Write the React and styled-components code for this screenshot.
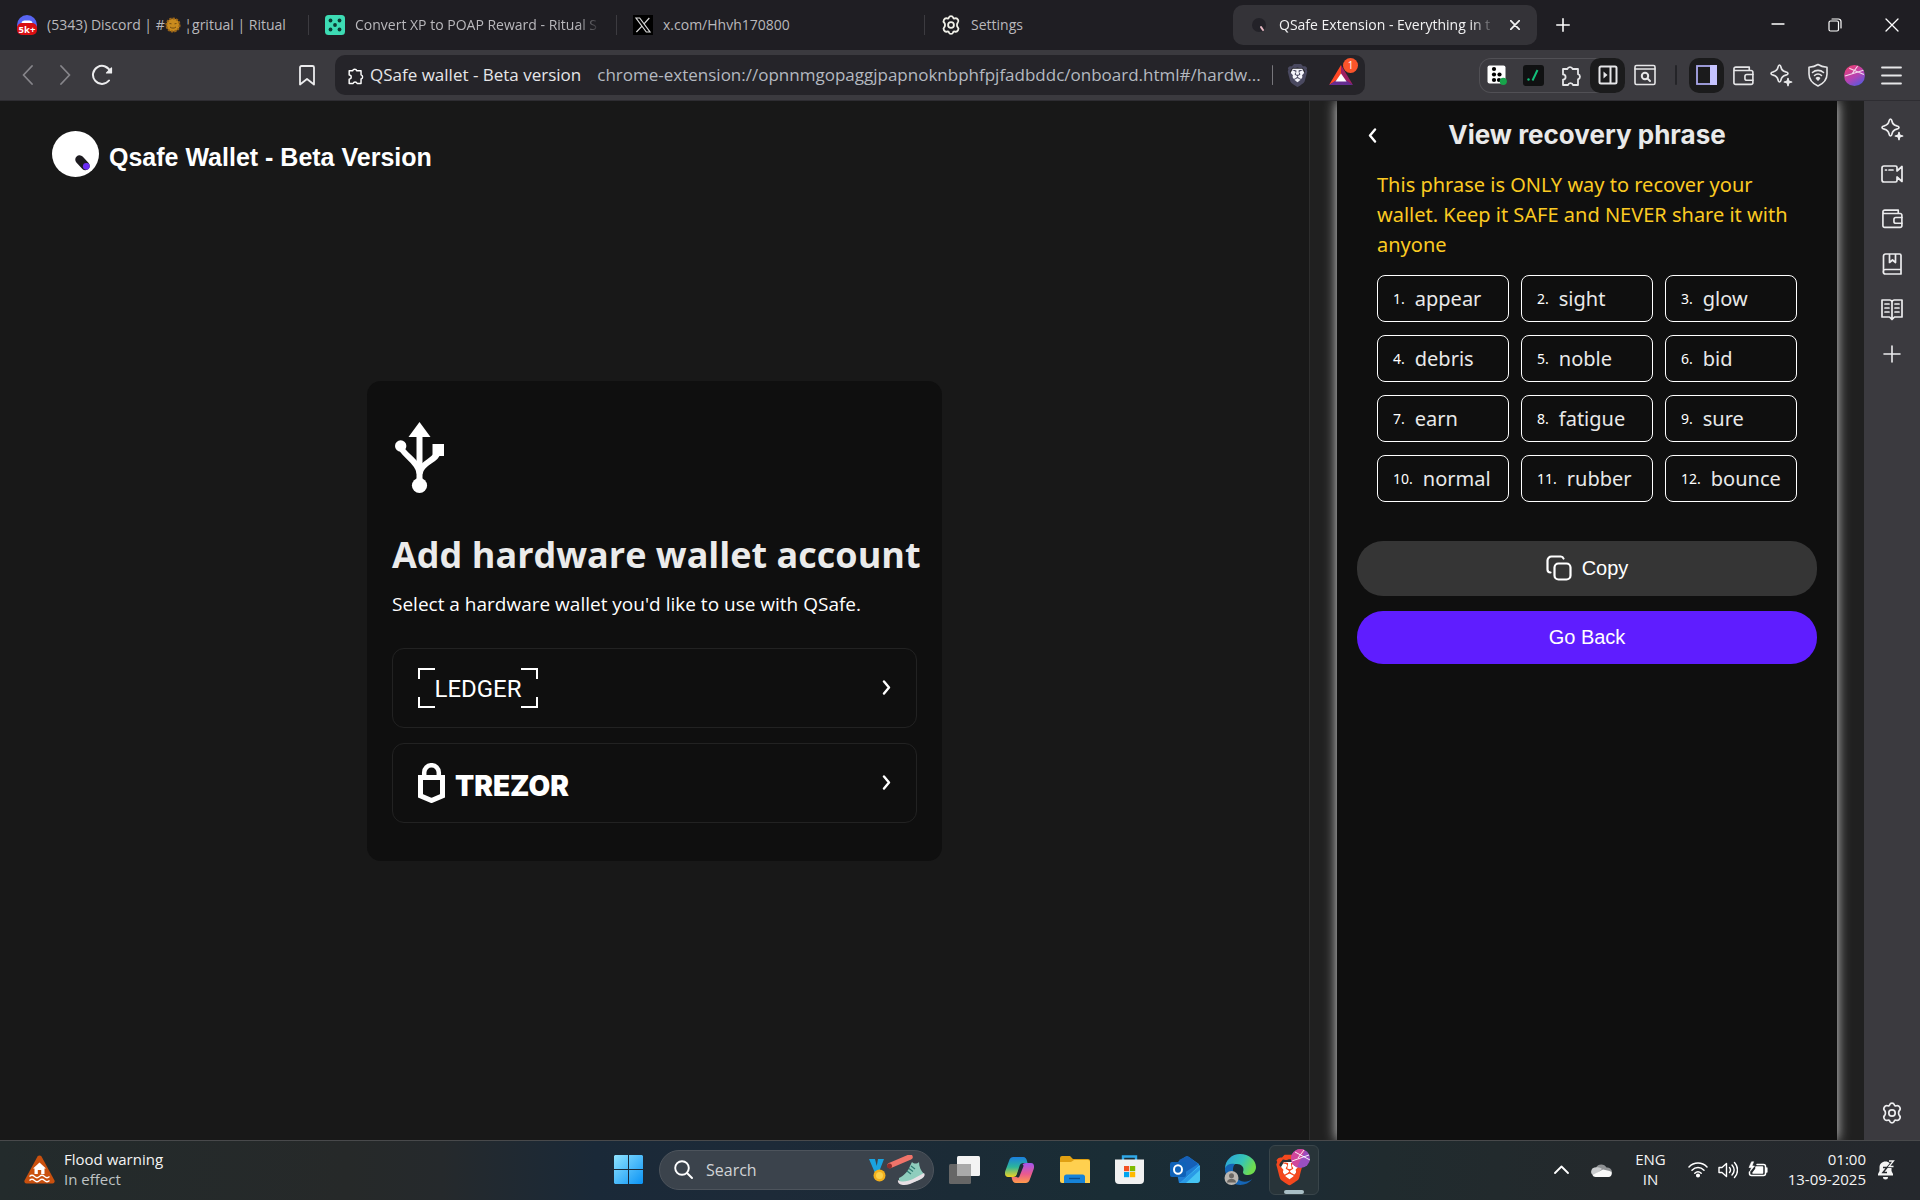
import React from "react";
import styled, { createGlobalStyle, css } from "styled-components";
import { SiBrave } from "react-icons/si";

const ui = `"Open Sans", "Noto Sans", sans-serif`;
const noto = `"Noto Sans", "Open Sans", sans-serif`;
const arial = `"Liberation Sans", Arial, sans-serif`;
const display = `Inter, "Open Sans", sans-serif`;

const Global = createGlobalStyle`
  *, *::before, *::after { box-sizing: border-box; }
  body { margin: 0; background: #181818; color: #fff; font-family: ${ui}; }
  h1, h2, p, ol { margin: 0; padding: 0; }
  ol { list-style: none; }
  button { border: 0; padding: 0; background: none; color: inherit; font: inherit; cursor: pointer; }
  input { border: 0; padding: 0; margin: 0; background: none; color: inherit; font: inherit; outline: none; }
  svg { display: block; flex: none; }
`;

const Screen = styled.div`
  display: flex;
  flex-direction: column;
  min-height: 100vh;
`;

/* ---------- tab strip ---------- */

const TabStrip = styled.header`
  display: flex;
  align-items: center;
  height: 50px;
  padding-left: 1px;
  background: #1f1e23;
`;

const Tab = styled.div`
  display: flex;
  align-items: center;
  flex: 0 1 308px;
  min-width: 0;
  height: 40px;
  padding: 0 16px;
  position: relative;
  color: #b9b8bc;
  ${(p) =>
    p.$divided &&
    css`
      &::after {
        content: "";
        position: absolute;
        right: 0;
        top: 10px;
        width: 1px;
        height: 20px;
        background: #3c3b40;
      }
    `}
  ${(p) =>
    p.$active &&
    css`
      flex-basis: 304px;
      border-radius: 10px;
      background: #343338;
      color: #f2f2f3;
    `}
`;

const TabLabel = styled.button`
  display: flex;
  align-items: center;
  gap: 10px;
  flex: 1;
  min-width: 0;
  text-align: left;
`;

const TabTitle = styled.span`
  display: flex;
  align-items: center;
  flex: 1;
  min-width: 0;
  overflow: hidden;
  white-space: pre;
  font-size: 14px;
  line-height: 20px;
  ${(p) =>
    p.$fade &&
    css`
      mask-image: linear-gradient(to right, #000 calc(100% - 24px), transparent);
    `}
`;

const StripButton = styled.button`
  display: grid;
  place-items: center;
  width: ${(p) => p.$w || 40}px;
  height: 40px;
`;

const TabClose = styled.button`
  display: grid;
  place-items: center;
  width: 24px;
  height: 24px;
  margin-left: 8px;
  margin-right: -6px;
`;

const WindowControls = styled.div`
  display: flex;
  margin-left: auto;
`;

/* ---------- toolbar ---------- */

const Toolbar = styled.div`
  display: flex;
  align-items: center;
  height: 51px;
  padding: 0 11px 0 9px;
  border-bottom: 1px solid #2e2d32;
  background: #3b3a3f;
`;

const NavGroup = styled.nav`
  display: flex;
  align-items: center;
  flex: 0 0 326px;
`;

const NavButton = styled.button`
  display: grid;
  place-items: center;
  width: 37px;
  height: 34px;
  color: ${(p) => (p.$dim ? "#86858a" : "#ececee")};
  &:last-child {
    margin-left: auto;
    margin-right: 10px;
  }
`;

const AddressBar = styled.div`
  display: flex;
  align-items: center;
  flex: 1;
  min-width: 0;
  height: 40px;
  padding: 0 7px 0 11px;
  border-radius: 10px;
  background: #252429;
`;

const SiteName = styled.span`
  margin: 0 16px 0 5px;
  white-space: nowrap;
  font-size: 17px;
  line-height: 24px;
  color: #e6e6e8;
`;

const UrlInput = styled.input`
  flex: 1;
  min-width: 0;
  font-size: 17px;
  line-height: 24px;
  color: #b4b9c0;
`;

const Divider = styled.span`
  flex: none;
  width: ${(p) => p.$w || 1}px;
  height: 20px;
  border-radius: 1px;
  margin: ${(p) => p.$m};
  background: ${(p) => p.$c};
`;

const ShieldButton = styled.button`
  margin-right: 20px;
`;

const RewardsButton = styled.button`
  position: relative;
  width: 29px;
  height: 32px;
  display: flex;
  align-items: center;
`;

const Badge = styled.span`
  position: absolute;
  top: -1px;
  right: 0;
  width: 15px;
  height: 15px;
  border-radius: 50%;
  background: #fb542b;
  color: #fff;
  font: 10px/15px ${ui};
  text-align: center;
`;

const Actions = styled.div`
  display: flex;
  align-items: center;
  gap: 2px;
  margin-left: 114px;
`;

const ExtensionGroup = styled.div`
  display: flex;
  gap: 2px;
  border-radius: 12px;
  box-shadow: inset 0 0 0 1px #515055;
`;

const ActionButton = styled.button`
  display: grid;
  place-items: center;
  width: 35px;
  height: 35px;
  border-radius: 10px;
  color: #e6e6e8;
  background: ${(p) => (p.$on ? "#1b1b1c" : "none")};
`;

/* ---------- page ---------- */

const Body = styled.div`
  display: flex;
  flex: 1;
`;

const Page = styled.main`
  display: grid;
  grid-template-rows: 1fr auto 1fr;
  justify-items: center;
  flex: 1;
  min-width: 0;
  border-right: 1px solid #2d2d2d;
  background: #181818;
`;

const Brand = styled.div`
  display: flex;
  align-items: flex-end;
  align-self: start;
  justify-self: start;
  gap: 10px;
  padding: 30px 52px;
  font: 700 25px/40px ${arial};
`;

const Card = styled.section`
  width: 575px;
  padding: 39px 25px 38px;
  border-radius: 14px;
  background: #0f0f0f;
`;

const CardTitle = styled.h1`
  margin-top: 34px;
  font-size: 36px;
  line-height: 50px;
  font-weight: 700;
  color: #ebebeb;
  white-space: nowrap;
`;

const CardText = styled.p`
  margin: 9px 0 29px;
  font-size: 19px;
  line-height: 30px;
`;

const WalletRow = styled.button`
  display: flex;
  align-items: center;
  justify-content: space-between;
  width: 100%;
  height: 80px;
  padding: 0 25px;
  border: 1px solid #222;
  border-radius: 12px;
  & + & {
    margin-top: 15px;
  }
`;

const LedgerFrame = styled.span`
  display: grid;
  place-items: center;
  width: 120px;
  height: 40px;
  padding-top: 1px;
  font: 400 24px/40px Roboto, sans-serif;
  --b: linear-gradient(#fff, #fff);
  background: var(--b) 0 0 / 17px 2px, var(--b) 0 0 / 2px 11px,
    var(--b) 100% 0 / 17px 2px, var(--b) 100% 0 / 2px 11px,
    var(--b) 0 100% / 17px 2px, var(--b) 0 100% / 2px 11px,
    var(--b) 100% 100% / 17px 2px, var(--b) 100% 100% / 2px 11px;
  background-repeat: no-repeat;
`;

const TrezorBrand = styled.span`
  display: flex;
  align-items: flex-end;
  gap: 10px;
  font: 900 28px/34px Inter, sans-serif;
`;

/* ---------- side panel ---------- */

const SidePanel = styled.aside`
  display: flex;
  justify-content: center;
  flex: 0 0 554px;
  overflow: hidden;
  background: #202020;
`;

const Popup = styled.div`
  width: 500px;
  padding: 17px 20px;
  background: #0f0f0f;
  box-shadow: 0 0 12px #ddd;
`;

const PopupHead = styled.div`
  display: grid;
  grid-template-columns: 30px 1fr 30px;
  align-items: center;
`;

const PopupTitle = styled.h2`
  font: 700 26px/34px ${display};
  text-align: center;
  color: #e9e9e9;
`;

const IconButton = styled.button`
  display: grid;
  place-items: center;
  height: 34px;
`;

const PopupBody = styled.div`
  padding: 18px 20px 39px;
  font-family: ${noto};
`;

const Warning = styled.p`
  font-size: 20px;
  line-height: 30px;
  color: #fbca22;
`;

const WordGrid = styled.ol`
  display: grid;
  grid-template-columns: repeat(3, 1fr);
  gap: 13px 12px;
  margin-top: 15px;
`;

const Word = styled.li`
  display: flex;
  align-items: center;
  gap: 10px;
  height: 47px;
  padding-left: 15px;
  border: 1px solid #fff;
  border-radius: 8px;
  font-size: 20px;
  color: #e9e9e9;
`;

const WordIndex = styled.span`
  font-size: 14px;
  color: #fff;
`;

const PillButton = styled.button`
  display: flex;
  align-items: center;
  justify-content: center;
  gap: 10px;
  width: 100%;
  height: ${(p) => (p.$primary ? 53 : 55)}px;
  padding-bottom: 2px;
  border-radius: 26px;
  background: ${(p) => (p.$primary ? "#5f1dff" : "#353535")};
  font: 20px/24px ${arial};
  & + & {
    margin-top: 15px;
  }
`;

const Sidebar = styled.nav`
  display: flex;
  flex-direction: column;
  flex: 0 0 56px;
  padding: 5px 0;
  background: #3b3a3f;
  color: #ececee;
`;

const SidebarButton = styled.button`
  display: grid;
  place-items: center;
  height: 45px;
  &:last-child {
    margin-top: auto;
  }
`;

/* ---------- taskbar ---------- */

const Taskbar = styled.footer`
  display: grid;
  grid-template-columns: 1fr auto 1fr;
  align-items: center;
  height: 60px;
  padding-bottom: 2px;
  border-top: 1px solid #48494b;
  background: linear-gradient(
    to right,
    #232b2c 0%,
    #262929 18%,
    #25292c 23%,
    #1a2938 31%,
    #1d2a38 40%,
    #1b2b36 50%,
    #1a2d35 58%,
    #1b2b36 66%,
    #202b2e 72%,
    #24292c 84%,
    #25282d 100%
  );
`;

const Widget = styled.button`
  display: flex;
  align-items: center;
  justify-self: start;
  gap: 9px;
  padding-left: 24px;
  text-align: left;
`;

const SmallLines = styled.span`
  display: flex;
  flex-direction: column;
  padding-bottom: 2px;
  font-size: 15px;
  line-height: 20px;
  color: #f4f4f4;
  text-align: ${(p) => p.$align || "left"};
`;

const Muted = styled.span`
  color: #bfc3c4;
`;

const Dock = styled.div`
  display: flex;
  align-items: center;
  height: 50px;
`;

const DockButton = styled.button`
  display: grid;
  place-items: center;
  width: ${(p) => p.$w || 55}px;
  height: 50px;
`;

const ActiveApp = styled.button`
  display: grid;
  grid-template-rows: 1fr 4px;
  justify-items: center;
  align-items: center;
  width: 50px;
  height: 50px;
  margin-left: 2px;
  border: 1px solid #39454a;
  border-radius: 6px;
  background: #283439;
  &::after {
    content: "";
    width: 20px;
    height: 4px;
    border-radius: 2px;
    background: #a9bfc6;
  }
`;

const SearchBox = styled.label`
  display: flex;
  align-items: center;
  gap: 13px;
  width: 275px;
  height: 40px;
  margin: 0 3px;
  padding: 0 8px 0 14px;
  border: 1px solid #4d545c;
  border-radius: 20px;
  background: #3b434c;
`;

const SearchInput = styled.input`
  flex: 1;
  min-width: 0;
  font-size: 16px;
  line-height: 24px;
  &::placeholder {
    color: #d0d3d6;
    opacity: 1;
  }
`;

const Tray = styled.div`
  display: flex;
  align-items: center;
  justify-self: end;
  padding-right: 25px;
`;

const TrayGroup = styled.button`
  display: flex;
  align-items: center;
  gap: ${(p) => p.$gap || 10}px;
  margin-left: ${(p) => p.$ml}px;
`;

/* ---------- icons ---------- */

const Icon = ({ size = 22, sw = 1.6, children, box = 24, ...rest }) => (
  <svg
    width={size}
    height={size}
    viewBox={`0 0 ${box} ${box}`}
    fill="none"
    stroke="currentColor"
    strokeWidth={sw}
    strokeLinecap="round"
    strokeLinejoin="round"
    aria-hidden="true"
    {...rest}
  >
    {children}
  </svg>
);

const PUZZLE =
  "M4 6h4.4a2.7 2.7 0 0 1 5.2 0H19v5.2a2.7 2.7 0 0 1 0 5.2V22h-5a2.6 2.6 0 0 0-5 0H4v-5.4a2.6 2.6 0 0 0 0-5.2z";
const GEAR =
  "M12 2.2c1 0 1.9.2 2.2 1.4.3 1 .9 1.5 2.2 1.1 1.6-.5 2.5.1 3.3 1.5.9 1.5.7 2.4-.3 3.3-1.1 1-1.1 4 0 5 1 .9 1.2 1.8.3 3.3-.8 1.4-1.7 2-3.3 1.5-1.3-.4-1.9.1-2.2 1.1-.3 1.2-1.2 1.4-2.2 1.4s-1.9-.2-2.2-1.4c-.3-1-.9-1.5-2.2-1.1-1.6.5-2.5-.1-3.3-1.5-.9-1.5-.7-2.4.3-3.3 1.1-1 1.1-4 0-5-1-.9-1.2-1.8-.3-3.3.8-1.4 1.7-2 3.3-1.5 1.3.4 1.9-.1 2.2-1.1.3-1.2 1.2-1.4 2.2-1.4z";

const Puzzle = ({ size = 24 }) => (
  <Icon size={size} sw={1.8}>
    <path d={PUZZLE} />
  </Icon>
);
const Gear = ({ size = 24, sw = 1.7, ...rest }) => (
  <Icon size={size} sw={sw} {...rest}>
    <path d={GEAR} />
    <circle cx="12" cy="12" r="3.2" />
  </Icon>
);
const WalletIcon = ({ size = 23 }) => (
  <Icon size={size} sw={1.7}>
    <path d="M2 6v13.5a1.8 1.8 0 0 0 1.8 1.8H20a1.8 1.8 0 0 0 1.8-1.8V8.600A1.8 1.8 0 0 0 20 6.800H3.500A1.5 1.5 0 0 1 2 5.300 2 2 0 0 1 4 3.200h14v3.400" />
    <path d="M21.8 11h-6.3a2 2 0 0 0-2 2v2a2 2 0 0 0 2 2h6.3" />
  </Icon>
);
const Sparkle = ({ size = 24 }) => (
  <Icon size={size} sw={1.7}>
    <path d="M10.5 2c.9 0 1.2.8 1.5 2.2.6 3 1.5 3.900 4.800 4.700 1.400.3 2.200.7 2.200 1.600s-.8 1.300-2.200 1.600c-3.300.8-4.200 1.700-4.800 4.700-.3 1.400-.6 2.200-1.500 2.200S9.300 18.200 9 16.800c-.6-3-1.500-3.900-4.800-4.700C2.800 11.800 2 11.400 2 10.500s.8-1.300 2.200-1.600C7.500 8.100 8.400 7.200 9 4.200 9.300 2.800 9.600 2 10.500 2z" />
    <path d="M19 15.500v7M15.500 19h7" />
    <path d="M19 16.500l.8 1.700 1.700.8-1.700.8-.8 1.700-.8-1.700-1.700-.8 1.700-.8z" fill="currentColor" />
  </Icon>
);
const Plus = ({ size = 18, sw = 1.6 }) => (
  <Icon size={size} sw={sw} box={18}>
    <path d="M9 1v16M1 9h16" />
  </Icon>
);
const Cross = ({ size = 14, sw = 1.3 }) => (
  <Icon size={size} sw={sw} box={14}>
    <path d="M1 1l12 12M13 1L1 13" />
  </Icon>
);

const Discord = () => (
  <svg width="20" height="20" viewBox="0 0 20 20" aria-hidden="true">
    <circle cx="10" cy="10" r="10" fill="#5865f2" />
    <path d="M4.500 8c.4-1.800 2-2.500 3-2.500h5c1 0 2.600.7 3 2.500z" fill="#fff" />
    <rect y="8" width="20" height="12" rx="5" fill="#d90f12" />
    <text x="10" y="17.500" fontSize="9.500" fontWeight="700" textAnchor="middle" fill="#fff" fontFamily="Open Sans">
      5k+
    </text>
  </svg>
);
const SunFace = () => (
  <svg width="16" height="16" viewBox="0 0 16 16" aria-hidden="true">
    <circle cx="8" cy="8" r="6.600" fill="#c98b1e" stroke="#9a6418" strokeWidth="2" strokeDasharray="2.200 1.200" />
    <path d="M4.500 6.500l2 .3M9.500 6.800l2-.3M5 10c1.500 1.500 4.500 1.500 6 0" stroke="#6b450f" strokeWidth="0.900" fill="none" />
  </svg>
);
const DiceTeal = () => (
  <svg width="20" height="20" viewBox="0 0 20 20" aria-hidden="true">
    <rect width="20" height="20" rx="3.500" fill="#3ddcb4" />
    <g fill="#0c3b33">
      <circle cx="5.500" cy="5.500" r="1.900" />
      <circle cx="14.500" cy="5.500" r="1.900" />
      <circle cx="10" cy="10" r="1.900" />
      <circle cx="5.500" cy="14.500" r="1.900" />
      <circle cx="14.500" cy="14.500" r="1.900" />
    </g>
  </svg>
);
const XLogo = () => (
  <svg width="20" height="20" viewBox="0 0 20 20" aria-hidden="true">
    <rect width="20" height="20" fill="#000" />
    <path d="M3 3h3.700L17 17h-3.700zM16.300 3l-5.500 6.200M9 11.200L3.400 17" stroke="#d8d8d8" strokeWidth="1.200" fill="none" />
  </svg>
);
const QFav = () => (
  <svg width="20" height="20" viewBox="0 0 20 20" aria-hidden="true">
    <circle cx="10" cy="10" r="7" fill="#232228" />
    <path d="M12 12l2 3" stroke="#e9b9c4" strokeWidth="2" strokeLinecap="round" />
  </svg>
);
const BraveShield = () => (
  <svg width="23" height="23" viewBox="0 0 24 24" aria-hidden="true">
    <path d="M7 5h10l2 4-3 9-4 3-4-3-3-9z" fill="#f4f4fa" />
    <SiBrave size={24} color="#4a4960" />
  </svg>
);
const Bat = () => (
  <svg width="24" height="20" viewBox="0 0 24 20" aria-hidden="true">
    <path d="M12 0L0 20l12-7z" fill="#ff4724" />
    <path d="M12 0l12 20-12-7z" fill="#9e1f63" />
    <path d="M0 20h24l-12-8z" fill="#662d91" />
    <path d="M12 8.500L6.500 16.500h11z" fill="#fff" />
  </svg>
);
const Ball = ({ size = 21 }) => (
  <svg width={size} height={size} viewBox="0 0 20 20" aria-hidden="true">
    <defs>
      <linearGradient id="ball" x1="0.200" y1="0" x2="0.800" y2="1">
        <stop offset="0" stopColor="#ee3f74" />
        <stop offset="0.550" stopColor="#b443b4" />
        <stop offset="1" stopColor="#4f5be0" />
      </linearGradient>
    </defs>
    <circle cx="10" cy="10" r="10" fill="url(#ball)" />
    <path d="M1 10.500L18.500 5M5 3l14 6M13 1L8 8" stroke="#fff" strokeWidth="1" opacity="0.800" />
  </svg>
);

const QLogo = () => (
  <svg width="47" height="46" viewBox="0 0 47 46" aria-hidden="true">
    <ellipse cx="23.500" cy="23" rx="23.500" ry="23" fill="#fff" />
    <path d="M27.500 28.500l6 6.500" stroke="#1d1b20" strokeWidth="8.500" strokeLinecap="round" />
    <circle cx="34.300" cy="35.300" r="3.400" fill="#6b2cf5" />
  </svg>
);
const Usb = () => (
  <svg width="56" height="76" viewBox="0 0 56 76" fill="none" stroke="#fff" aria-hidden="true">
    <path d="M27.500 62V14" strokeWidth="6" />
    <path d="M27.500 2L38.500 17h-22z" fill="#fff" stroke="none" />
    <path d="M8.500 26c1 8 18 15 19 27M46.500 30c-1 11-18 12-19 24" strokeWidth="6" />
    <circle cx="8.700" cy="26" r="5.700" fill="#fff" stroke="none" />
    <rect x="40.500" y="24" width="11.500" height="12" fill="#fff" stroke="none" />
    <circle cx="27.500" cy="65.500" r="7.600" fill="#fff" stroke="none" />
  </svg>
);
const Lock = () => (
  <svg width="27" height="40" viewBox="0 0 27 40" fill="none" stroke="#fff" aria-hidden="true">
    <path d="M2.500 14.500h22v18.300L13.500 37.500l-11-4.700z" strokeWidth="5" />
    <path d="M6.200 14V9.500a7.300 7.300 0 0 1 14.600 0V14" strokeWidth="4.500" />
  </svg>
);
const Chevron = ({ left }) => (
  <Icon width="9" height="15" viewBox="0 0 9 15" sw={2.4}>
    <path d={left ? "M7 1.500L2 7.500l5 6" : "M2 1.500l5 6-5 6"} />
  </Icon>
);

const FloodIcon = () => (
  <svg width="31" height="29" viewBox="0 0 31 29" aria-hidden="true">
    <path d="M13.500 1.500a2.400 2.400 0 0 1 4 0L30.500 25.500a2.200 2.200 0 0 1-2 3h-26a2.200 2.200 0 0 1-2-3z" fill="#c9500e" />
    <path d="M15.500 7.500l6.500 6h-1.500v5.500h-3.300v-4h-3.400v4h-3.300v-5.500H9z" fill="#fff" />
    <path d="M5.500 21.500q2.500-2.500 5 0t5 0 5 0 5 0M5.500 25.500q2.500-2.500 5 0t5 0 5 0 5 0" stroke="#fff" strokeWidth="1.300" fill="none" />
  </svg>
);
const WindowsLogo = () => (
  <svg width="29" height="29" viewBox="0 0 29 29" aria-hidden="true">
    <defs>
      <linearGradient id="win" gradientUnits="userSpaceOnUse" x1="0" y1="0" x2="29" y2="29">
        <stop offset="0" stopColor="#8fe3ff" />
        <stop offset="1" stopColor="#0a93f5" />
      </linearGradient>
    </defs>
    <path d="M1 0h13v14H0V1zM15 0h13l1 1v13H15zM0 15h14v14H1l-1-1zM15 15h14v13l-1 1H15z" fill="url(#win)" />
  </svg>
);
const SearchArt = () => (
  <svg width="56" height="30" viewBox="0 0 56 30" aria-hidden="true">
    <path d="M0 4h6l3 12-3 2zM9 4h6l-5 13-3-2z" fill="#1aa3e0" />
    <circle cx="10.500" cy="20.500" r="6" fill="#f2b01d" />
    <circle cx="10.500" cy="20.500" r="3.500" fill="#fbd04a" />
    <path d="M21 10.500L41 2" stroke="#f0746a" strokeWidth="5.500" strokeLinecap="round" />
    <circle cx="20.500" cy="11" r="2.500" fill="#8f2e2b" />
    <path d="M30 23c4-2 9-6 11-12l2-4c2 2 5 2 7 0 0 5 2 9 5 12 1 3-2 5-5 6l-8 3c-6 2-13 0-12-5z" fill="#8fcdbd" />
    <path d="M29 25c4 3 10 1 15-1l11-6c2 3-1 5-5 7l-9 4c-6 2-13 1-12-4z" fill="#e8dfe4" />
    <path d="M38 16l4 3M40 13.500l4 3M42 11l4 3" stroke="#2f7c74" strokeWidth="1.200" />
  </svg>
);
const TaskView = () => (
  <svg width="31" height="28" viewBox="0 0 31 28" aria-hidden="true">
    <rect x="8" width="23" height="20" rx="1.500" fill="#f3f3f3" />
    <rect y="8" width="22" height="20" rx="1.500" fill="#666" />
    <rect x="8" y="8" width="14" height="12" fill="#a9a9a9" />
  </svg>
);
const Copilot = () => (
  <svg width="29" height="26" viewBox="0 0 29 26" aria-hidden="true">
    <defs>
      <linearGradient id="cpA" x1="0" y1="0" x2="0" y2="1">
        <stop offset="0" stopColor="#1b7fe0" />
        <stop offset="0.500" stopColor="#2cb59a" />
        <stop offset="1" stopColor="#f2d321" />
      </linearGradient>
      <linearGradient id="cpB" x1="0" y1="0" x2="0" y2="1">
        <stop offset="0" stopColor="#a255f0" />
        <stop offset="0.550" stopColor="#ea5a8e" />
        <stop offset="1" stopColor="#ff9b4a" />
      </linearGradient>
    </defs>
    <path d="M8.500 0H18c2.500 0 3.500 2 4 4l.5 2h-4c-2 0-3.500 1-4 3l-2.500 8c-.6 2-1.600 3-4 3H3c-3 0-3.500-3-2.700-6L4 4c.8-2.500 2-4 4.500-4z" fill="url(#cpA)" />
    <path d="M20.500 26H11c-2.500 0-3.500-2-4-4l-.5-2h4c2 0 3.500-1 4-3L17 9c.6-2 1.600-3 4-3h5c3 0 3.500 3 2.700 6L25 22c-.8 2.500-2 4-4.500 4z" fill="url(#cpB)" />
    <path d="M17 9l-4 10" stroke="#1b2b36" strokeWidth="3" strokeLinecap="round" />
  </svg>
);
const Folder = () => (
  <svg width="30" height="27" viewBox="0 0 30 27" aria-hidden="true">
    <path d="M0 2a2 2 0 0 1 2-2h8l3 3h15a2 2 0 0 1 2 2v6H0z" fill="#e0a012" />
    <path d="M0 6h11l3-2h14a2 2 0 0 1 2 2v21H2a2 2 0 0 1-2-2z" fill="#ffd04f" />
    <path d="M4 27v-6a2.500 2.500 0 0 1 2.500-2.500h16A2.500 2.500 0 0 1 25 21v6z" fill="#1683d8" />
    <path d="M9 22.500h11" stroke="#0b4f8f" strokeWidth="1.400" />
  </svg>
);
const Store = () => (
  <svg width="29" height="29" viewBox="0 0 29 29" aria-hidden="true">
    <path d="M8 6V1.500h13V6" stroke="#2fa8e8" strokeWidth="2.400" fill="none" />
    <path d="M0 4.500h29V25a4 4 0 0 1-4 4H4a4 4 0 0 1-4-4z" fill="#f1f1f1" />
    <rect x="9" y="11" width="5.200" height="5.200" fill="#f25022" />
    <rect x="15" y="11" width="5.200" height="5.200" fill="#7fba00" />
    <rect x="9" y="17" width="5.200" height="5.200" fill="#00a4ef" />
    <rect x="15" y="17" width="5.200" height="5.200" fill="#ffb900" />
  </svg>
);
const Outlook = () => (
  <svg width="30" height="27" viewBox="0 0 30 27" aria-hidden="true">
    <path d="M5 8L15 1q2-1.300 4 0l10 7v16a3 3 0 0 1-3 3H9z" fill="#1f7fd6" />
    <path d="M9 4l6-3q2-1.300 4 0l9 7-14 9z" fill="#1560b8" />
    <path d="M30 9v15a3 3 0 0 1-3 3H10z" fill="#45c4f3" />
    <path d="M10 27L30 10v4L16 27z" fill="#2a9ae6" />
    <rect y="6" width="16" height="15" rx="2" fill="#0f62b8" />
    <ellipse cx="8" cy="13.500" rx="4" ry="4.300" fill="none" stroke="#fff" strokeWidth="2" />
  </svg>
);
const Edge = () => (
  <svg width="32" height="31" viewBox="0 0 32 31" aria-hidden="true">
    <defs>
      <linearGradient id="edg" x1="0" y1="0" x2="1" y2="0.400">
        <stop offset="0" stopColor="#2a9fe0" />
        <stop offset="0.600" stopColor="#36c5b6" />
        <stop offset="1" stopColor="#6fdc4f" />
      </linearGradient>
    </defs>
    <path d="M1 15C1 6 8 0 16 0c9 0 16 6 16 13 0 5-4 8-8 8-4 0-5-1.500-5-3 2-5-2-8-6-8S3 12 1 18z" fill="url(#edg)" />
    <path d="M1 14c2-4 6-5 10-4-4 4-2 14 6 17 4 1.500 8 .5 11-2-5 8-19 8-24-.5C1.500 21 1 17 1 14z" fill="#1565b5" />
    <circle cx="7.500" cy="24" r="7" fill="#b9b5b0" />
    <circle cx="7.500" cy="21.800" r="2.500" fill="#6a6763" />
    <path d="M3 28.500c0-5 9-5 9 0z" fill="#6a6763" />
  </svg>
);
const BraveApp = () => (
  <svg width="36" height="38" viewBox="0 0 36 38" aria-hidden="true">
    <path d="M8 13h11l3 5-4 11-4.500 4L9 29 5 18z" fill="#fff" />
    <svg x="-2" y="5" width="31" height="32" viewBox="0 0 24 24">
      <SiBrave size={24} color="#f4481e" />
    </svg>
    <g transform="translate(15 0)">
      <circle cx="9.500" cy="9.500" r="9.500" fill="#9a4fc0" />
      <path d="M0 9.500A9.500 9.500 0 0 1 14 1.200L6 18.400A9.500 9.500 0 0 1 0 9.500z" fill="#d0469c" />
      <path d="M1 12l17-6M4 3l15 8M13 1L7 9" stroke="#fff" strokeWidth="0.900" />
    </g>
  </svg>
);

/* ---------- data ---------- */

const WORDS = ["appear", "sight", "glow", "debris", "noble", "bid", "earn", "fatigue", "sure", "normal", "rubber", "bounce"];

const DOCK_APPS = [
  ["Task view", <TaskView />],
  ["Copilot", <Copilot />],
  ["File Explorer", <Folder />],
  ["Microsoft Store", <Store />],
  ["Outlook", <Outlook />],
  ["Microsoft Edge", <Edge />],
];

const SIDEBAR_ITEMS = [
  ["Leo AI", <Sparkle />],
  [
    "Talk",
    <Icon size={24} sw={1.7}>
      <path d="M4 4h11.500c1 0 1.500.5 1.500 1.500V9l5-4.500v15L17 15v3.500c0 1-.5 1.500-1.500 1.500H4a2 2 0 0 1-2-2V6a2 2 0 0 1 2-2z" />
      <path d="M5.500 8h1M9 8h4" />
    </Icon>,
  ],
  ["Wallet", <WalletIcon />],
  [
    "Bookmarks",
    <Icon size={24} sw={1.7}>
      <path d="M21 17.500H5.500a2 2 0 0 0 0 4.500H21V3.500A1.500 1.500 0 0 0 19.500 2h-14A2 2 0 0 0 3.500 4v15.500M9.500 2v8.500L12.500 8l3 2.500V2" />
    </Icon>,
  ],
  [
    "Reading list",
    <Icon size={24} sw={1.7}>
      <path d="M2 3h7.500a2.500 2.500 0 0 1 2.500 2 2.500 2.500 0 0 1 2.500-2H22v17h-7.500L12 22.500 9.500 20H2zM12 5v17M5 7h4M5 11h4M5 15h4M15 7h4M15 11h4M15 15h4" />
    </Icon>,
  ],
  ["Add", <Plus size={18} />],
];

export default function App() {
  return (
    <Screen>
      <Global />
      <TabStrip>
        <Tab $divided>
          <TabLabel>
            <Discord />
            <TabTitle>
              (5343) Discord | #<SunFace /> ¦gritual | Ritual
            </TabTitle>
          </TabLabel>
        </Tab>
        <Tab $divided>
          <TabLabel>
            <DiceTeal />
            <TabTitle $fade>Convert XP to POAP Reward - Ritual S</TabTitle>
          </TabLabel>
        </Tab>
        <Tab $divided>
          <TabLabel>
            <XLogo />
            <TabTitle>x.com/Hhvh170800</TabTitle>
          </TabLabel>
        </Tab>
        <Tab>
          <TabLabel>
            <Gear size={20} sw={2} viewBox="1 1 22 22" stroke="#f0f0e8" />
            <TabTitle>Settings</TabTitle>
          </TabLabel>
        </Tab>
        <Tab $active>
          <TabLabel>
            <QFav />
            <TabTitle $fade>QSafe Extension - Everything in t</TabTitle>
          </TabLabel>
          <TabClose aria-label="Close tab">
            <Cross size={10} sw={2.4} />
          </TabClose>
        </Tab>
        <StripButton $w={51} aria-label="New tab">
          <Plus size={14} sw={2} />
        </StripButton>
        <WindowControls>
          <StripButton $w={57} aria-label="Minimize">
            <Icon size={14} sw={1.3} box={14}>
              <path d="M1 6h12" />
            </Icon>
          </StripButton>
          <StripButton $w={57} aria-label="Restore">
            <Icon size={14} sw={1.2} box={14}>
              <rect x="1" y="3" width="9.500" height="10" rx="1.500" />
              <path d="M4 1h6.500A2.500 2.500 0 0 1 13 3.500V10" />
            </Icon>
          </StripButton>
          <StripButton $w={57} aria-label="Close">
            <Cross />
          </StripButton>
        </WindowControls>
      </TabStrip>

      <Toolbar>
        <NavGroup aria-label="Browser">
          <NavButton $dim aria-label="Back">
            <Icon size={20} sw={1.8} box={20}>
              <path d="M14 1L5.500 10l8.500 9" />
            </Icon>
          </NavButton>
          <NavButton $dim aria-label="Forward">
            <Icon size={20} sw={1.8} box={20}>
              <path d="M6 1l8.500 9L6 19" />
            </Icon>
          </NavButton>
          <NavButton aria-label="Reload">
            <Icon size={22} sw={2} box={22}>
              <path d="M18 16.500A9 9 0 1 1 19.500 8" />
              <path d="M20.500 4v5h-5z" fill="currentColor" strokeWidth="1.200" />
            </Icon>
          </NavButton>
          <NavButton aria-label="Bookmark">
            <Icon size={22} sw={1.8} box={22}>
              <path d="M4 3.500A1.500 1.500 0 0 1 5.500 2h11A1.500 1.500 0 0 1 18 3.500V20.500l-7-5.500-7 5.500z" />
            </Icon>
          </NavButton>
        </NavGroup>
        <AddressBar>
          <Puzzle size={19} />
          <SiteName>QSafe wallet - Beta version</SiteName>
          <UrlInput
            aria-label="Address"
            readOnly
            value="chrome-extension://opnnmgopaggjpapnoknbphfpjfadbddc/onboard.html#/hardw..."
          />
          <Divider $c="#77767b" $m="0 13px 0 4px" />
          <ShieldButton aria-label="Brave Shields">
            <BraveShield />
          </ShieldButton>
          <RewardsButton aria-label="Brave Rewards">
            <Bat />
            <Badge>1</Badge>
          </RewardsButton>
        </AddressBar>
        <Actions>
          <ExtensionGroup>
            <ActionButton aria-label="Dice extension">
              <svg width="20" height="20" viewBox="0 0 20 20" aria-hidden="true">
                <rect x="0.500" y="0.500" width="18" height="18" rx="2" fill="#fff" />
                <g fill="#000">
                  <circle cx="7" cy="4" r="2.100" />
                  <circle cx="7" cy="9.500" r="2.100" />
                  <circle cx="12.500" cy="9.500" r="2.100" />
                  <circle cx="7" cy="15" r="2.100" />
                  <circle cx="12" cy="15" r="2.100" />
                </g>
                <circle cx="16.300" cy="16.300" r="3.600" fill="#17a34a" />
              </svg>
            </ActionButton>
            <ActionButton aria-label="Terminal extension">
              <svg width="21" height="21" viewBox="0 0 21 21" aria-hidden="true">
                <rect width="21" height="21" rx="3" fill="#101112" />
                <path d="M14.500 5L9.500 15.500" stroke="#12c07a" strokeWidth="2" />
                <circle cx="5.500" cy="14.500" r="1.200" fill="#12c07a" />
              </svg>
            </ActionButton>
            <ActionButton aria-label="Extensions">
              <Puzzle />
            </ActionButton>
            <ActionButton $on aria-label="Toggle side panel">
              <Icon size={20} sw={2} box={20}>
                <rect x="1.500" y="1.500" width="17" height="17" rx="1.500" />
                <path d="M12.500 2v16" />
                <path d="M5.500 6.500l4 3.500-4 3.500z" fill="currentColor" stroke="none" />
              </Icon>
            </ActionButton>
          </ExtensionGroup>
          <ActionButton aria-label="Search tabs">
            <Icon size={22} sw={1.6} box={22}>
              <rect x="1" y="1.500" width="20" height="19" rx="1.500" />
              <path d="M1 5h20" />
              <circle cx="11" cy="12" r="3.200" strokeWidth="2" />
              <path d="M13.500 14.500L16 17" strokeWidth="2" />
            </Icon>
          </ActionButton>
          <Divider $w={2} $c="#242428" $m="0 10px 0 11px" />
          <ActionButton $on aria-label="Sidebar">
            <svg width="21" height="20" viewBox="0 0 21 20" aria-hidden="true">
              <rect x="1" y="1" width="19" height="18" fill="none" stroke="#a9a7ea" strokeWidth="1.800" />
              <rect x="14" y="0" width="7" height="20" fill="#c5c3ff" />
            </svg>
          </ActionButton>
          <ActionButton aria-label="Wallet">
            <WalletIcon />
          </ActionButton>
          <ActionButton aria-label="Leo AI">
            <Sparkle />
          </ActionButton>
          <ActionButton aria-label="VPN">
            <Icon size={24} sw={1.6}>
              <path d="M12 1.500c3 2 5.500 2.500 9 2.700V11c0 6-3.500 9.500-9 12-5.500-2.500-9-6-9-12V4.200c3.500-.2 6-.7 9-2.700z" />
              <path d="M6.500 9.500c3-2.800 8-2.800 11 0M8.500 12.500c2-1.800 5-1.800 7 0" />
              <path d="M10.500 15.200c1-.8 2-.8 3 0L12 17z" fill="currentColor" />
            </Icon>
          </ActionButton>
          <ActionButton aria-label="Profile">
            <Ball />
          </ActionButton>
          <ActionButton aria-label="Menu">
            <Icon size={21} sw={1.8} box={21}>
              <path d="M1 2.500h19M1 10.500h19M1 18.500h19" />
            </Icon>
          </ActionButton>
        </Actions>
      </Toolbar>

      <Body>
        <Page>
          <Brand>
            <QLogo />
            Qsafe Wallet - Beta Version
          </Brand>
          <Card>
            <Usb />
            <CardTitle>Add hardware wallet account</CardTitle>
            <CardText>Select a hardware wallet you'd like to use with QSafe.</CardText>
            <WalletRow>
              <LedgerFrame>LEDGER</LedgerFrame>
              <Chevron />
            </WalletRow>
            <WalletRow>
              <TrezorBrand>
                <Lock />
                TREZOR
              </TrezorBrand>
              <Chevron />
            </WalletRow>
          </Card>
        </Page>

        <SidePanel>
          <Popup>
            <PopupHead>
              <IconButton aria-label="Back">
                <Chevron left />
              </IconButton>
              <PopupTitle>View recovery phrase</PopupTitle>
            </PopupHead>
            <PopupBody>
              <Warning>
                This phrase is ONLY way to recover your wallet. Keep it SAFE and NEVER share it with anyone
              </Warning>
              <WordGrid>
                {WORDS.map((w, i) => (
                  <Word key={w}>
                    <WordIndex>{i + 1}.</WordIndex>
                    {w}
                  </Word>
                ))}
              </WordGrid>
            </PopupBody>
            <PillButton>
              <Icon size={26} sw={2.2} box={26}>
                <rect x="8.500" y="8.500" width="16" height="16" rx="4" />
                <path d="M17.500 3.500A3 3 0 0 0 14.500 1.500H5.500a4 4 0 0 0-4 4v9a3 3 0 0 0 3 3" />
              </Icon>
              Copy
            </PillButton>
            <PillButton $primary>Go Back</PillButton>
          </Popup>
        </SidePanel>

        <Sidebar aria-label="Sidebar">
          {SIDEBAR_ITEMS.map(([label, icon]) => (
            <SidebarButton key={label} aria-label={label}>
              {icon}
            </SidebarButton>
          ))}
          <SidebarButton aria-label="Settings">
            <Gear />
          </SidebarButton>
        </Sidebar>
      </Body>

      <Taskbar>
        <Widget>
          <FloodIcon />
          <SmallLines>
            Flood warning
            <Muted>In effect</Muted>
          </SmallLines>
        </Widget>
        <Dock>
          <DockButton aria-label="Start">
            <WindowsLogo />
          </DockButton>
          <SearchBox>
            <Icon size={19} sw={1.9} box={19}>
              <circle cx="8" cy="8" r="6.800" />
              <path d="M13 13l5 5" />
            </Icon>
            <SearchInput placeholder="Search" aria-label="Search" />
            <SearchArt />
          </SearchBox>
          {DOCK_APPS.map(([label, icon]) => (
            <DockButton key={label} aria-label={label}>
              {icon}
            </DockButton>
          ))}
          <ActiveApp aria-label="Brave">
            <BraveApp />
          </ActiveApp>
        </Dock>
        <Tray>
          <TrayGroup $ml={0} aria-label="Show hidden icons">
            <Icon width="15" height="9" viewBox="0 0 15 9" sw={1.8}>
              <path d="M1 8l6.500-6.500L14 8" />
            </Icon>
          </TrayGroup>
          <TrayGroup $ml={22} aria-label="OneDrive">
            <svg width="21" height="14" viewBox="0 0 21 14" aria-hidden="true">
              <path d="M5 4.500a6 6 0 0 1 10.500 0A5 5 0 0 1 21 9l-3 4H4A4.300 4.300 0 0 1 5 4.500z" fill="#8f9294" />
              <path d="M5 4.500c2-.8 4.500 0 6 1.500L3 12.800A4.300 4.300 0 0 1 5 4.500z" fill="#c9cbcd" />
              <path d="M1.500 12L12 6.500c3 .5 6 1 8.500 2.500 1 2.500-.5 5-3 5H4.500c-1.500 0-2.500-.8-3-2z" fill="#fafafa" />
            </svg>
          </TrayGroup>
          <TrayGroup $ml={23}>
            <SmallLines $align="center">
              <span>ENG</span>
              <span>IN</span>
            </SmallLines>
          </TrayGroup>
          <TrayGroup $ml={22} aria-label="Network, volume, battery">
            <Icon width="20" height="17" viewBox="0 0 20 17" sw={1.5}>
              <path d="M1 6c5-5.300 13-5.300 18 0M4 9.300c3.500-3.600 8.500-3.600 12 0M6.800 12.300c2-2 4.400-2 6.400 0" />
              <circle cx="10" cy="14.500" r="1.300" fill="currentColor" />
            </Icon>
            <Icon width="20" height="18" viewBox="0 0 20 18" sw={1.4}>
              <path d="M1 6.500v5h3l4.500 4V2.500L4 6.500zM11.500 6.500c1.200 1.500 1.200 3.500 0 5M14 4c2.600 3 2.600 7 0 10M16.500 1.500c4 4.500 4 10.500 0 15" />
            </Icon>
            <Icon width="20" height="17" viewBox="0 0 20 17" sw={1.5}>
              <path d="M9 3.500h6.500a2 2 0 0 1 2 2v7a2 2 0 0 1-2 2h-12a2 2 0 0 1-2-2V11M18.800 7v4" />
              <path d="M8 6h6.500v6H5L8 8z" fill="currentColor" />
              <path d="M3.500 1L1 6.500h2.500L2 10.500 6.500 5H4l1.500-4z" fill="currentColor" strokeWidth="0.600" />
            </Icon>
          </TrayGroup>
          <TrayGroup $ml={20} $gap={11}>
            <SmallLines $align="right">
              <span>01:00</span>
              <span>13-09-2025</span>
            </SmallLines>
            <svg width="18" height="20" viewBox="0 0 18 20" aria-hidden="true">
              <path d="M1 14l1.500-3V7.500C2.500 4 5 1.500 8.500 1.500s6 2.500 6 6V11l1.500 3v1.500H1zM6 17h5a2.500 2.500 0 0 1-5 0z" fill="#f4f4f4" />
              <path d="M12 1h4.500L12 6.500h4.500" stroke="#25282d" strokeWidth="3" fill="none" />
              <path d="M6 7.500h4l-4 5h4" stroke="#25282d" strokeWidth="1.500" fill="none" />
              <path d="M12 1h4.500L12 6.500h4.500" stroke="#f4f4f4" strokeWidth="1.300" fill="none" />
            </svg>
          </TrayGroup>
        </Tray>
      </Taskbar>
    </Screen>
  );
}
